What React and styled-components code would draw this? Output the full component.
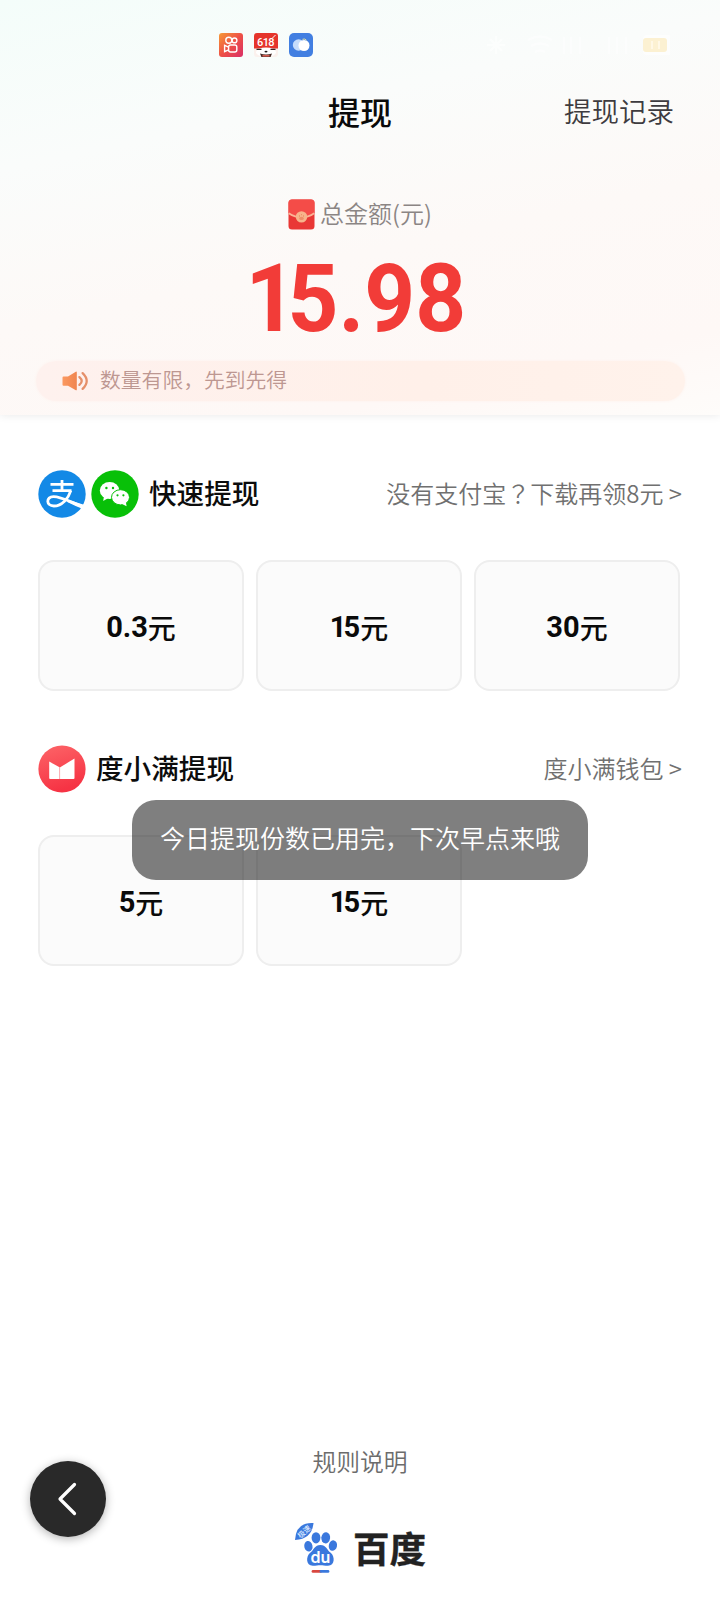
import styled, { createGlobalStyle } from "styled-components";

const GlobalStyle = createGlobalStyle`
  * {
    box-sizing: border-box;
  }

  body {
    margin: 0;
    background: #fff;
    font-family: "Noto Sans CJK SC", sans-serif;
    font-weight: 350;
  }
`;

const Page = styled.div`
  position: relative;
  display: flex;
  flex-direction: column;
  width: 720px;
  height: 1600px;
  background: #fff;
  overflow: hidden;
`;

const Header = styled.header`
  display: flex;
  flex-direction: column;
  height: 415px;
  background: linear-gradient(
    168deg,
    #f4fdfa 0%,
    #fafcfb 30%,
    #fdf9f7 58%,
    #fef8f6 85%,
    #fefcfa 100%
  );
  box-shadow: 0 1px 8px rgba(0, 0, 0, 0.08);
`;

const StatusBar = styled.div`
  display: flex;
  justify-content: space-between;
  align-items: center;
  height: 90px;
  padding: 0 50px 0 219px;
`;

const StatusGroup = styled.div`
  display: flex;
  align-items: center;
  gap: 11px;
`;

const TitleBar = styled.div`
  display: grid;
  grid-template-columns: 1fr auto 1fr;
  align-items: center;
  height: 42px;
  padding: 0 46px;
`;

const Title = styled.h1`
  grid-column: 2;
  margin: 0;
  font-size: 32px;
  font-weight: 500;
  line-height: 42px;
  color: #0a0a0a;
`;

const RecordLink = styled.a`
  justify-self: end;
  font-size: 27.5px;
  line-height: 38px;
  margin-top: -2px;
  color: #3e3b3f;
`;

const TotalLabel = styled.div`
  display: flex;
  justify-content: center;
  align-items: center;
  gap: 5px;
  margin-top: 64px;
  height: 36px;
  font-size: 24px;
  line-height: 32px;
  color: #8b8584;

  span {
    margin-bottom: 3px;
  }
`;

const Amount = styled.div`
  display: flex;
  justify-content: center;
  height: 96px;
  margin-top: 19px;
  padding-right: 9px;
  font-family: Roboto, sans-serif;
  font-size: 95px;
  font-weight: 700;
  line-height: 96px;
  color: #f23c38;
  transform: scaleX(0.935);
`;

// pulls the digit after a "1" closer, as in a proportional face
const NarrowOne = styled.span`
  letter-spacing: -0.1em;
`;

const Notice = styled.div`
  display: flex;
  align-items: center;
  gap: 11px;
  width: 649px;
  height: 40px;
  margin: 14px 0 0 36px;
  padding: 0 26px;
  border-radius: 20px;
  background: linear-gradient(90deg, #fef1ee, #fff0e9 60%, #fff2eb);
  box-shadow: 0 0 3px #fff1ec;
  font-size: 20.8px;
  color: #bd9791;

  span {
    margin-bottom: 4px;
  }
`;

const Section = styled.section`
  display: flex;
  flex-direction: column;
  padding: 0 38px;
  margin-top: ${({ $top }) => $top}px;
`;

const SectionHead = styled.div`
  display: flex;
  align-items: center;
  height: 50px;
`;

const Icons = styled.div`
  display: flex;
  gap: 5px;
`;

const SectionTitle = styled.h2`
  flex: 1;
  margin: 0 0 3px 10px;
  font-size: 27.6px;
  font-weight: 500;
  line-height: 47px;
  color: #0c0c0c;
`;

const MoreLink = styled.a`
  margin-bottom: 3px;
  font-size: 24px;
  line-height: 47px;
  white-space: pre;
  color: #707070;
`;

const CenteredMark = styled.span`
  font-family: "Noto Sans CJK TC", sans-serif;
`;

const Options = styled.div`
  display: grid;
  grid-template-columns: repeat(3, 206px);
  gap: 12px;
  margin-top: 41px;
`;

const Option = styled.button`
  display: flex;
  justify-content: center;
  align-items: center;
  height: 131px;
  padding: 2px 0 0;
  border: 2px solid #eee;
  border-radius: 16px;
  background: #fbfbfb;
  font-family: Roboto, sans-serif;
  font-size: 29px;
  font-weight: 700;
  color: #0a0a0a;
`;

const Unit = styled.span`
  font-family: "Noto Sans CJK SC", sans-serif;
  font-size: 28px;
  font-weight: 500;
`;

const Toast = styled.div`
  position: absolute;
  top: 800px;
  left: 132px;
  display: flex;
  justify-content: center;
  align-items: center;
  width: 456px;
  height: 80px;
  padding-bottom: 6px;
  border-radius: 24px;
  background: rgba(0, 0, 0, 0.5);
  font-size: 25px;
  color: #fff;
`;

const Footer = styled.footer`
  display: flex;
  flex-direction: column;
  align-items: center;
  margin-top: auto;
  height: 157px;
`;

const Rules = styled.a`
  font-size: 23.8px;
  line-height: 36px;
  color: #6c6c6c;
`;

const Brand = styled.div`
  display: flex;
  align-items: center;
  gap: 13px;
  margin-top: 41px;
  height: 56px;
`;

const BrandName = styled.span`
  font-size: 36.5px;
  font-weight: 700;
  line-height: 50px;
  color: #222;
  -webkit-text-stroke: 0.4px #222;
`;

const BackButton = styled.button`
  position: absolute;
  left: 30px;
  top: 1461px;
  display: flex;
  justify-content: center;
  align-items: center;
  width: 76px;
  height: 76px;
  padding: 0 2px 0 0;
  border: 0;
  border-radius: 50%;
  background: #292929;
  box-shadow: 0 2px 10px rgba(0, 0, 0, 0.3);
`;

function KuaishouIcon() {
  return (
    <svg width="24" height="24" viewBox="0 0 24 24">
      <defs>
        <linearGradient id="ks" x1="0" y1="0" x2="1" y2="1">
          <stop offset="0" stopColor="#f69a36" />
          <stop offset="0.5" stopColor="#ee5046" />
          <stop offset="1" stopColor="#d92f68" />
        </linearGradient>
      </defs>
      <rect width="24" height="24" rx="3" fill="url(#ks)" />
      <g fill="none" stroke="#fff" strokeWidth="1.4">
        <circle cx="9.8" cy="7.2" r="3" />
        <circle cx="15.5" cy="7.4" r="2.4" />
        <rect x="9.6" y="12" width="8.2" height="7" rx="2" />
        <path d="m9.6 14.2-4-1.8v6.2l4-1.8" />
      </g>
    </svg>
  );
}

function FestivalIcon() {
  return (
    <svg width="24" height="24" viewBox="0 0 24 24">
      <rect width="24" height="24" rx="3" fill="#fbf1ed" />
      <path d="M3 0h18a3 3 0 0 1 3 3v12.5H0V3a3 3 0 0 1 3-3z" fill="#e5342b" />
      <text
        x="11.5"
        y="13"
        textAnchor="middle"
        fontFamily="Roboto, sans-serif"
        fontSize="11"
        fontWeight="500"
        letterSpacing="-0.6"
        fill="#fff"
      >
        618
      </text>
      <path d="m18.5 5 3-3" stroke="#fff" />
      <ellipse cx="12" cy="19.2" rx="10" ry="4.7" fill="#fff" />
      <path d="M2.5 16.4h5M16.5 16.4h5" stroke="#382a29" strokeWidth="1.2" />
      <ellipse cx="12" cy="18.6" rx="1.5" ry="0.9" fill="#1d1717" />
      <path d="M6 20.5q6 1.8 12 0l-1.4 3.5H7.4z" fill="#482b27" />
      <path d="M8.5 22.8h7" stroke="#df5e52" strokeWidth="1.5" />
    </svg>
  );
}

function CloudIcon() {
  return (
    <svg width="24" height="24" viewBox="0 0 24 24">
      <rect width="24" height="24" rx="5" fill="#427fe1" />
      <circle cx="9.6" cy="12" r="5.8" fill="#c5dcfb" />
      <circle cx="15" cy="12.5" r="5.5" fill="#fff" />
      <path d="M13.5 6.3q2.5-1 4 1" stroke="#e8e5a3" fill="none" />
    </svg>
  );
}

// nearly invisible white glyphs on the pale header
function StatusGlyphs() {
  return (
    <svg width="190" height="34" viewBox="0 0 190 34">
      <g stroke="#fff" fill="none" strokeWidth="2.4" opacity="0.55">
        <path d="M7 17h18M16 8v18M10 11l12 12M10 23l12-12" />
        <path d="M48 12q12-7 24 0M51 18q9-5 18 0M55 24q5-3 10 0" />
        <path d="M84 9v17M91 9v17M100 9v17M129 9v17M137 9v17M146 9v17" />
      </g>
      <rect x="163" y="7" width="29" height="20" rx="4" fill="#fff" opacity="0.6" />
      <rect x="163" y="10" width="24" height="14" rx="3" fill="#fcf1d2" />
      <path d="M172 13v8M179 13v8" stroke="#fff8e6" strokeWidth="2" />
    </svg>
  );
}

function RedPacketIcon() {
  return (
    <svg width="27" height="31" viewBox="0 0 27 31">
      <rect x="0.5" y="0.5" width="26" height="30" rx="3.5" fill="#e93735" />
      <path
        d="M.5 14V4A3.5 3.5 0 0 1 4 .5h19A3.5 3.5 0 0 1 26.5 4v10q-13 9-26 0z"
        fill="#f44c48"
      />
      <path
        d="M.7 14.2q13 8.4 25.6 0"
        fill="none"
        stroke="#fbb597"
        strokeWidth="1.7"
      />
      <circle cx="13.5" cy="17.9" r="5.7" fill="#f7b48b" />
      <ellipse cx="13.5" cy="19.4" rx="2.3" ry="1.7" fill="#ee8f68" />
      <path
        d="M11 17h1M13 15.6h1M15 17h1"
        stroke="#ee8f68"
        strokeWidth="1.3"
      />
    </svg>
  );
}

function SpeakerIcon() {
  return (
    <svg width="27" height="20" viewBox="0 0 27 20">
      <defs>
        <linearGradient id="horn">
          <stop offset="0" stopColor="#fb9960" />
          <stop offset="1" stopColor="#f08550" />
        </linearGradient>
      </defs>
      <path
        d="M1.5 5.4H6L13.4.9q1.4-.8 1.4.7v16.8q0 1.4-1.4.7L6 14.8H1.5q-1 0-1-1V6.4q0-1 1-1z"
        fill="url(#horn)"
      />
      <path
        d="M17.4 6.1q4.6 3.9 0 7.8M20.6 2.1q8.2 7.9 0 15.8"
        fill="none"
        stroke="#e58f69"
        strokeWidth="2.3"
        strokeLinecap="round"
      />
    </svg>
  );
}

function AlipayIcon() {
  return (
    <svg width="48" height="48" viewBox="0 0 48 48">
      <circle cx="24" cy="24" r="23.7" fill="#1389e6" />
      <g fill="none" stroke="#fff" strokeWidth="2.8">
        <path d="M24 10v10.5M12.5 14.3h23M14.5 20.6h19" />
        <path d="M32.8 20.6C30.5 28.3 24 36 15.8 36c-7.7 0-8.2-9.3-.3-9.3 7.5 0 15 4.4 30 10.2" />
      </g>
      <path d="M30 29.8 46.7 35l-1.8 4.1q-6.5-2.4-15.6-7z" fill="#fff" />
    </svg>
  );
}

function WechatIcon() {
  return (
    <svg width="48" height="48" viewBox="0 0 48 48">
      <circle cx="24" cy="24" r="23.7" fill="#08c008" />
      <ellipse cx="18.6" cy="20.5" rx="9.8" ry="8.4" fill="#fff" />
      <path d="m13 26-.8 5 5.2-3z" fill="#fff" />
      <circle cx="15.4" cy="18" r="1.2" fill="#08c008" />
      <circle cx="22" cy="18" r="1.2" fill="#08c008" />
      <ellipse
        cx="29.5"
        cy="27.3"
        rx="9"
        ry="7.6"
        fill="#fff"
        stroke="#08c008"
        strokeWidth="1"
      />
      <path d="m31 34 4.6 2.3-.8-4.3z" fill="#fff" />
      <circle cx="26.5" cy="25.3" r="1.1" fill="#08c008" />
      <circle cx="32.4" cy="25.3" r="1.1" fill="#08c008" />
    </svg>
  );
}

function DuxiaomanIcon() {
  return (
    <svg width="48" height="48" viewBox="0 0 48 48">
      <defs>
        <linearGradient id="dxm" x1="0" y1="0" x2="0.3" y2="1">
          <stop offset="0" stopColor="#fd6568" />
          <stop offset="1" stopColor="#f63344" />
        </linearGradient>
      </defs>
      <circle cx="24" cy="24" r="23.6" fill="url(#dxm)" />
      <path d="M11.2 16.6 22 22.4V34H12.2q-1 0-1-1z" fill="#fff" />
      <path d="M21.8 22.4 36.5 13.6V33q0 1-1 1H21.8z" fill="#fff" />
      <path d="M21.6 22v12" stroke="#f9a0a7" strokeWidth="0.9" />
    </svg>
  );
}

function PawLogo() {
  return (
    <svg width="46" height="56" viewBox="0 0 46 56">
      <g fill="#3a78dd">
        <path d="M1 20Q2 2 19.5 3 18 19 1 20z" />
        <ellipse cx="14.4" cy="26.3" rx="4.1" ry="5.3" transform="rotate(-12 14.4 26.3)" />
        <ellipse cx="22" cy="17.8" rx="4.4" ry="5.6" />
        <ellipse cx="31.7" cy="17.8" rx="4.4" ry="5.6" transform="rotate(8 31.7 17.8)" />
        <ellipse cx="38.9" cy="25.6" rx="4.1" ry="5.3" transform="rotate(12 38.9 25.6)" />
        <path d="M26.4 25c5.6 0 6.6 5 10.3 7.8 4.3 3.6 4.4 13-2.7 13-3.5 0-5.1-.5-7.6-.5s-4.1.5-7.6.5c-7.1 0-7-9.4-2.6-13C19.8 30 20.8 25 26.4 25z" />
      </g>
      <text
        x="26.4"
        y="43"
        textAnchor="middle"
        fontFamily="Inter, sans-serif"
        fontSize="16"
        fontWeight="600"
        fill="#fff"
      >
        du
      </text>
      <text
        x="10.5"
        y="14.4"
        textAnchor="middle"
        fontSize="7.5"
        fontWeight="500"
        fill="#dfeaff"
        transform="rotate(-42 10.5 12)"
      >
        极速
      </text>
      <path d="M19 51.4h7.5" stroke="#d9473f" strokeWidth="2.8" strokeLinecap="round" />
      <path d="M27 51.4h7" stroke="#3a78dd" strokeWidth="2.8" strokeLinecap="round" />
    </svg>
  );
}

const quickOptions = ["0.3", "15", "30"];
const walletOptions = ["5", "15"];

function Digits({ value }) {
  if (!value.startsWith("1")) {
    return <span>{value}</span>;
  }
  return (
    <span>
      <NarrowOne>1</NarrowOne>
      {value.slice(1)}
    </span>
  );
}

function OptionList({ values }) {
  return (
    <Options>
      {values.map((value) => (
        <Option key={value}>
          <Digits value={value} />
          <Unit>元</Unit>
        </Option>
      ))}
    </Options>
  );
}

function App() {
  return (
    <>
      <GlobalStyle />
      <Page>
        <Header>
          <StatusBar>
            <StatusGroup>
              <KuaishouIcon />
              <FestivalIcon />
              <CloudIcon />
            </StatusGroup>
            <StatusGlyphs />
          </StatusBar>
          <TitleBar>
            <Title>提现</Title>
            <RecordLink>提现记录</RecordLink>
          </TitleBar>
          <TotalLabel>
            <RedPacketIcon />
            <span>总金额(元)</span>
          </TotalLabel>
          <Amount>
            <Digits value="15.98" />
          </Amount>
          <Notice>
            <SpeakerIcon />
            <span>数量有限，先到先得</span>
          </Notice>
        </Header>

        <Section $top={54}>
          <SectionHead>
            <Icons>
              <AlipayIcon />
              <WechatIcon />
            </Icons>
            <SectionTitle>快速提现</SectionTitle>
            <MoreLink>
              没有支付宝<CenteredMark>？</CenteredMark>下载再领8元 &gt;
            </MoreLink>
          </SectionHead>
          <OptionList values={quickOptions} />
        </Section>

        <Section $top={53}>
          <SectionHead>
            <Icons>
              <DuxiaomanIcon />
            </Icons>
            <SectionTitle>度小满提现</SectionTitle>
            <MoreLink>度小满钱包 &gt;</MoreLink>
          </SectionHead>
          <OptionList values={walletOptions} />
        </Section>

        <Footer>
          <Rules>规则说明</Rules>
          <Brand>
            <PawLogo />
            <BrandName>百度</BrandName>
          </Brand>
        </Footer>

        <Toast>今日提现份数已用完，下次早点来哦</Toast>
        <BackButton aria-label="返回">
          <svg width="20" height="34" viewBox="0 0 20 34">
            <path
              d="M17.5 2.5 3 17l14.5 14.5"
              fill="none"
              stroke="#fff"
              strokeWidth="3.2"
              strokeLinecap="round"
              strokeLinejoin="round"
            />
          </svg>
        </BackButton>
      </Page>
    </>
  );
}

export default App;
